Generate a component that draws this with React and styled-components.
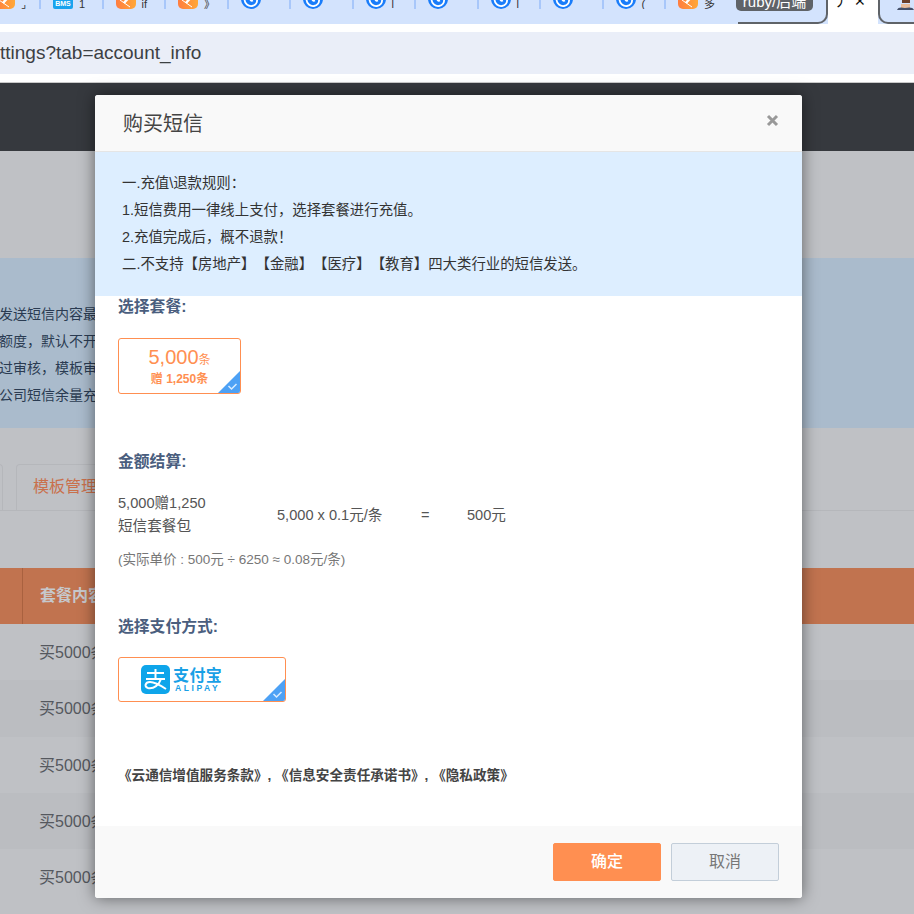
import React from "react";
import styled, { createGlobalStyle } from "styled-components";

const FONT = `"Liberation Sans", "Noto Sans CJK SC", sans-serif`;

const Global = createGlobalStyle`
  html, body { margin: 0; padding: 0; background: #fff; }
  * { box-sizing: border-box; }
  body { font-family: ${FONT}; text-spacing-trim: space-all; }
`;

const Screen = styled.div`
  position: relative;
  width: 914px;
  height: 914px;
  overflow: hidden;
  display: flex;
  flex-direction: column;
`;

/* browser chrome */
const TabStrip = styled.div`
  height: 24px;
  background: #d3e3fd;
  display: flex;
  padding-left: 39px;
  overflow: hidden;
  flex-shrink: 0;
`;
const Tab = styled.div`
  width: 62.5px;
  height: 9px;
  flex-shrink: 0;
  border-left: 2px solid #a8c7fa;
  display: flex;
  align-items: flex-end;
  padding-left: 12px;
  gap: 6px;
  font-size: 11px;
  line-height: 9px;
  color: #333;
  overflow: hidden;
`;
const FirstTab = styled(Tab)`
  position: absolute;
  left: -5px;
  top: 0;
  width: 44px;
  border: 0;
  padding-left: 0;
`;
const IconBox = styled.svg`
  width: 20px;
  height: 20px;
  flex-shrink: 0;
  display: block;
`;
const Tooltip = styled.div`
  position: absolute;
  left: 736px;
  top: -8px;
  width: 77px;
  height: 19px;
  border-radius: 5px;
  background: #5f6368;
  color: #fff;
  font-size: 15px;
  line-height: 19px;
  text-align: center;
  white-space: nowrap;
`;
const ActiveOutline = styled.div`
  position: absolute;
  left: 738px;
  top: -10px;
  width: 90px;
  height: 34px;
  border: 2px solid #5f6368;
  border-top: 0;
  border-left: 0;
  border-bottom-right-radius: 10px;
`;
const NextOutline = styled.div`
  position: absolute;
  left: 878px;
  top: -10px;
  width: 60px;
  height: 34px;
  border: 2px solid #5f6368;
  border-top: 0;
  border-right: 0;
  border-bottom-left-radius: 10px;
  background: #d3e3fd;
`;
const ActiveTab = styled.div`
  position: absolute;
  left: 828px;
  top: 0;
  width: 50px;
  height: 24px;
  background: #fff;
  color: #111;
  font-size: 14px;
  line-height: 2px;
  padding: 0 12px 0 6px;
  display: flex;
  justify-content: space-between;
`;
const Avatar = styled.svg`
  position: absolute;
  left: 897px;
  top: 0;
  width: 17px;
  height: 10px;
`;
const AddressGap = styled.div`
  height: 8px;
  background: #fff;
  flex-shrink: 0;
`;
const AddressBar = styled.div`
  height: 42px;
  background: #eaeef8;
  color: #3c4043;
  font-size: 19px;
  line-height: 42px;
  white-space: nowrap;
  flex-shrink: 0;
`;
const ChromeEdge = styled.div`
  height: 9px;
  background: #fff;
  border-bottom: 1px solid #c9c9c9;
  flex-shrink: 0;
`;

/* dimmed page behind the dialog */
const Page = styled.div`
  flex: 1;
  background: #bfc1c5;
  display: flex;
  flex-direction: column;
  min-height: 0;
`;
const TopNav = styled.div`
  height: 68px;
  background: #36393e;
  flex-shrink: 0;
`;
const Notice = styled.div`
  margin-top: 107px;
  height: 170px;
  background: #aabbcc;
  padding-top: 43px;
  font-size: 14px;
  line-height: 27px;
  color: #2a3b52;
  white-space: nowrap;
  flex-shrink: 0;
`;
const NoticeLine = styled.div`
  margin-left: -1px;
`;
const TabRow = styled.div`
  margin-top: 36px;
  height: 47px;
  border-bottom: 1px solid #b5b7bb;
  display: flex;
  align-items: flex-end;
  padding-left: 13px;
  margin-left: -130px;
  gap: 13px;
  flex-shrink: 0;
`;
const PageTab = styled.div`
  height: 46px;
  width: ${(p) => p.$w}px;
  border: 1px solid #b5b7bb;
  border-bottom: 0;
  border-radius: 4px 4px 0 0;
  color: #c9704c;
  font-size: 16px;
  line-height: 44px;
  padding-left: 16px;
  white-space: nowrap;
`;
const TableHead = styled.div`
  margin-top: 57px;
  height: 56px;
  background: #c1734f;
  display: flex;
  flex-shrink: 0;
`;
const HeadCell = styled.div`
  margin-left: 22px;
  border-left: 1px solid #a9613f;
  padding-left: 17px;
  color: #c6c8cc;
  font-size: 16px;
  font-weight: 700;
  line-height: 56px;
  white-space: nowrap;
`;
const TableRow = styled.div`
  height: 56.25px;
  background: ${(p) => (p.$alt ? "#bbbdc1" : "#bfc1c5")};
  padding-left: 39px;
  color: #55585e;
  font-size: 16px;
  line-height: 57px;
  white-space: nowrap;
  flex-shrink: 0;
`;

/* dialog */
const Dialog = styled.div`
  position: absolute;
  left: 95px;
  top: 95px;
  width: 707px;
  height: 803px;
  background: #fff;
  border-radius: 3px;
  overflow: hidden;
  box-shadow: 0 0 16px rgba(0, 0, 0, 0.5);
  display: flex;
  flex-direction: column;
`;
const DialogHead = styled.div`
  height: 57px;
  flex-shrink: 0;
  background: #f9f9f9;
  border-bottom: 1px solid #e5e5e5;
  padding: 0 23px 0 28px;
  display: flex;
  align-items: center;
  justify-content: space-between;
`;
const DialogTitle = styled.div`
  font-size: 20px;
  color: #444;
  margin-top: -1px;
`;
const CloseIcon = styled.svg`
  width: 13px;
  height: 13px;
  margin-top: -6px;
`;
const Rules = styled.div`
  height: 144px;
  flex-shrink: 0;
  background: #ddeeff;
  padding: 18px 0 0 27px;
  font-size: 14.4px;
  line-height: 27px;
  color: #333;
`;
const Body = styled.div`
  flex: 1;
  padding: 0 23px;
  display: flex;
  flex-direction: column;
  min-height: 0;
`;
const SectionTitle = styled.div`
  font-size: 15.8px;
  font-weight: 700;
  line-height: 22px;
  color: #4a5e7e;
  margin-top: ${(p) => p.$top}px;
`;
const Choice = styled.div`
  position: relative;
  width: ${(p) => p.$w}px;
  height: ${(p) => p.$h}px;
  margin-top: ${(p) => p.$top}px;
  border: 1px solid #ff8f51;
  border-radius: 3px;
  overflow: hidden;
`;
const Corner = styled.svg`
  position: absolute;
  right: 0;
  bottom: 0;
  width: 22px;
  height: 22px;
`;
const Package = styled(Choice)`
  display: flex;
  flex-direction: column;
  align-items: center;
  color: #ff8f51;
`;
const PackageMain = styled.div`
  font-size: 20px;
  line-height: 24px;
  margin-top: 6px;
  small { font-size: 12px; }
`;
const PackageSub = styled.div`
  font-size: 12px;
  font-weight: 700;
  line-height: 14px;
`;
const SumRow = styled.div`
  display: flex;
  align-items: center;
  margin-top: 19px;
  font-size: 14.6px;
  line-height: 23px;
  color: #555;
`;
const SumName = styled.div`
  width: 159px;
`;
const SumCalc = styled.div`
  width: 144px;
  white-space: nowrap;
`;
const SumEq = styled.div`
  width: 46px;
`;
const RealPrice = styled.div`
  font-size: 13.5px;
  line-height: 18px;
  color: #777;
  margin-top: 13px;
`;
const Pay = styled(Choice)`
  display: flex;
  align-items: center;
  padding-left: 22px;
`;
const AlipayMark = styled.svg`
  width: 29px;
  height: 29px;
  flex-shrink: 0;
`;
const AlipayWords = styled.div`
  margin-left: 3px;
  color: #18a0e6;
  display: flex;
  flex-direction: column;
  align-items: center;
`;
const AlipayCn = styled.div`
  font-size: 16px;
  font-weight: 700;
  line-height: 17px;
  letter-spacing: 0.4px;
`;
const AlipayEn = styled.div`
  font-size: 8.500px;
  font-weight: 700;
  line-height: 9px;
  letter-spacing: 2.6px;
`;
const Terms = styled.div`
  margin-top: 65px;
  font-size: 13.6px;
  font-weight: 700;
  line-height: 18px;
  color: #444;
  white-space: nowrap;
`;
const DialogFoot = styled.div`
  height: 72px;
  flex-shrink: 0;
  background: #f9f9f9;
  display: flex;
  justify-content: flex-end;
  gap: 10px;
  padding: 17px 23px 0 0;
`;
const Button = styled.div`
  width: 108px;
  height: 38px;
  border-radius: 2px;
  font-size: 16px;
  font-weight: ${(p) => (p.$primary ? 500 : 400)};
  line-height: 35px;
  text-align: center;
  border: 1px solid ${(p) => (p.$primary ? "#ff8f51" : "#c3ced9")};
  background: ${(p) => (p.$primary ? "#ff8f51" : "#edf1f6")};
  color: ${(p) => (p.$primary ? "#fff" : "#777")};
`;

const Orange = () => (
  <IconBox viewBox="0 -11 20 20">
    <defs>
      <linearGradient id="orangeTile" x1="0" y1="0" x2="1" y2="0">
        <stop offset="0" stopColor="#ff7d40" />
        <stop offset="1" stopColor="#ffa838" />
      </linearGradient>
    </defs>
    <rect x="0" y="-11" width="20" height="20" rx="5" fill="url(#orangeTile)" />
    <path d="M4 0l10 7" stroke="#fff" strokeWidth="1" fill="none" />
    <path d="M15 -5L8 3" stroke="#fff" strokeWidth="2.500" fill="none" />
  </IconBox>
);
const Swirl = () => (
  <IconBox viewBox="0 -11 20 20">
    <circle cx="10" cy="-1" r="10" fill="#1a7dfa" />
    <path d="M3.500 -1c0 5 4 7.500 7.500 7c3.500-.5 5.500-3.500 5-6.500c-.5-2.500-4-3.500-6-1.500c-1.500 1.500 0 3.500 2 2.500" stroke="#fff" strokeWidth="1.800" fill="none" />
  </IconBox>
);
const Bms = () => (
  <IconBox viewBox="0 -11 20 20">
    <rect x="0" y="-11" width="20" height="20" rx="2" fill="#19a3ee" />
    <text x="10" y="6" textAnchor="middle" fontSize="7" fontWeight="700" fill="#fff" fontFamily={"Liberation Sans"}>BMS</text>
  </IconBox>
);

const tabs = [
  { icon: Bms, t: "1" },
  { icon: Orange, t: "if" },
  { icon: Orange, t: "》" },
  { icon: Swirl, t: "" },
  { icon: Swirl, t: "" },
  { icon: Swirl, t: "l" },
  { icon: Swirl, t: "" },
  { icon: Swirl, t: "l" },
  { icon: Swirl, t: "" },
  { icon: Swirl, t: "(" },
  { icon: Orange, t: "多" },
];

const Check = () => (
  <Corner viewBox="0 0 22 22">
    <path d="M22 0V22H0Z" fill="#4da1f5" />
    <path d="M10.500 15l3 3 5-5" stroke="#d9ecff" strokeWidth="1.500" fill="none" />
  </Corner>
);

export default function App() {
  return (
    <Screen>
      <Global />
      <TabStrip>
        {tabs.map((x, i) => {
          const Icon = x.icon;
          return (
            <Tab key={i}>
              <Icon />
              <span>{x.t}</span>
            </Tab>
          );
        })}
      </TabStrip>
      <FirstTab>
        <Orange />
        <span>⌟</span>
      </FirstTab>
      <ActiveOutline />
      <Tooltip>ruby/后端</Tooltip>
      <ActiveTab>
        <span>丿</span>
        <span>✕</span>
      </ActiveTab>
      <NextOutline />
      <Avatar viewBox="0 0 17 10">
        <path d="M4 4h9v5H4z" fill="#e9bd9c" />
        <path d="M0 10c1-3 4-3 8-2 4-1 8-1 9 2z" fill="#44506a" />
        <path d="M5 0h8v3H5z" fill="#6b3f2a" />
      </Avatar>
      <AddressGap />
      <AddressBar>ttings?tab=account_info</AddressBar>
      <ChromeEdge />
      <Page>
        <TopNav />
        <Notice>
          <NoticeLine>发送短信内容最</NoticeLine>
          <NoticeLine>额度，默认不开</NoticeLine>
          <NoticeLine>过审核，模板审</NoticeLine>
          <NoticeLine>公司短信余量充</NoticeLine>
        </Notice>
        <TabRow>
          <PageTab $w={120} />
          <PageTab $w={200}>模板管理</PageTab>
        </TabRow>
        <TableHead>
          <HeadCell>套餐内容</HeadCell>
        </TableHead>
        <TableRow>买5000条</TableRow>
        <TableRow $alt>买5000条</TableRow>
        <TableRow>买5000条</TableRow>
        <TableRow $alt>买5000条</TableRow>
        <TableRow>买5000条</TableRow>
      </Page>
      <Dialog>
        <DialogHead>
          <DialogTitle>购买短信</DialogTitle>
          <CloseIcon viewBox="0 0 13 13">
            <path d="M2 2l9 9M11 2l-9 9" stroke="#999" strokeWidth="3" />
          </CloseIcon>
        </DialogHead>
        <Rules>
          <div>一.充值\退款规则：</div>
          <div>1.短信费用一律线上支付，选择套餐进行充值。</div>
          <div>2.充值完成后，概不退款！</div>
          <div>二.不支持【房地产】【金融】【医疗】【教育】四大类行业的短信发送。</div>
        </Rules>
        <Body>
          <SectionTitle $top={0}>选择套餐:</SectionTitle>
          <Package $w={123} $h={56} $top={20}>
            <PackageMain>
              5,000<small>条</small>
            </PackageMain>
            <PackageSub>赠 1,250条</PackageSub>
            <Check />
          </Package>
          <SectionTitle $top={57}>金额结算:</SectionTitle>
          <SumRow>
            <SumName>
              5,000赠1,250
              <br />
              短信套餐包
            </SumName>
            <SumCalc>5,000 x 0.1元/条</SumCalc>
            <SumEq>=</SumEq>
            <div>500元</div>
          </SumRow>
          <RealPrice>(实际单价 : 500元 ÷ 6250 ≈ 0.08元/条)</RealPrice>
          <SectionTitle $top={47}>选择支付方式:</SectionTitle>
          <Pay $w={168} $h={45} $top={19}>
            <AlipayMark viewBox="0 0 29 29">
              <rect width="29" height="29" rx="5" fill="#0ea5ea" />
              <path d="M6 8h17M14.500 4v9M5 14h19M20 14c-2 6-7 10-13 9-4-1-3-6 2-6 4 0 10 3 16 7" stroke="#fff" strokeWidth="2" fill="none" />
            </AlipayMark>
            <AlipayWords>
              <AlipayCn>支付宝</AlipayCn>
              <AlipayEn>ALIPAY</AlipayEn>
            </AlipayWords>
            <Check />
          </Pay>
          <Terms>《云通信增值服务条款》, 《信息安全责任承诺书》, 《隐私政策》</Terms>
        </Body>
        <DialogFoot>
          <Button $primary>确定</Button>
          <Button>取消</Button>
        </DialogFoot>
      </Dialog>
    </Screen>
  );
}
